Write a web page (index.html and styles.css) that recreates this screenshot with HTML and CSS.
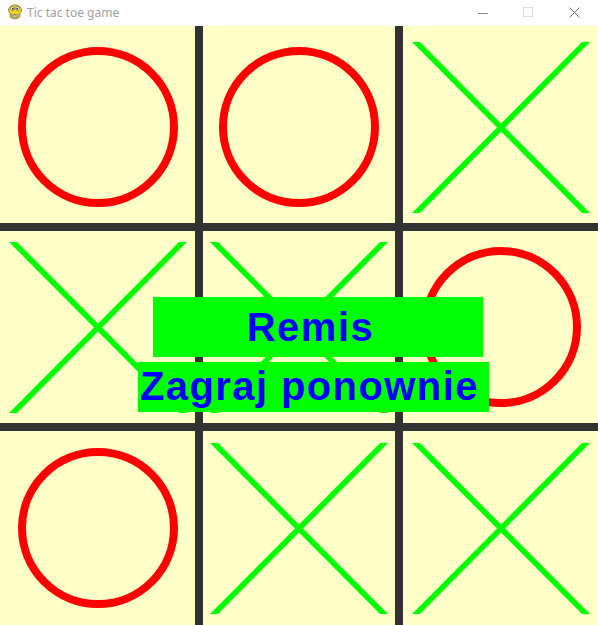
FILE: index.html
```html
<!DOCTYPE html>
<html lang="pl">
<head>
    <meta charset="UTF-8">
    <title>Tic tac toe game</title>
    <link rel="stylesheet" href="styles.css">
</head>
<body>
<div id="window">
    <div class="titlebar">
        <svg class="app-icon" width="16" height="16" viewBox="0 0 16 16">
            <ellipse cx="8" cy="6" rx="6.5" ry="5" fill="#f2d21b" stroke="#8a7a10" stroke-width="0.8"/>
            <circle cx="5.5" cy="4.5" r="2" fill="#fff" stroke="#555" stroke-width="0.6"/>
            <circle cx="10.5" cy="4.5" r="2" fill="#fff" stroke="#555" stroke-width="0.6"/>
            <circle cx="5.8" cy="4.7" r="0.9" fill="#222"/>
            <circle cx="10.2" cy="4.7" r="0.9" fill="#222"/>
            <path d="M3 10 Q8 16 13 10 L13 13 Q8 17 3 13 Z" fill="#d9c01a" stroke="#8a7a10" stroke-width="0.6"/>
            <rect x="5" y="11" width="5" height="3" rx="1" fill="#bbb" stroke="#666" stroke-width="0.5"/>
        </svg>
        <span class="title">Tic tac toe game</span>
        <div class="controls">
            <span class="ctl ctl-min"></span>
            <span class="ctl ctl-max"></span>
            <svg class="ctl-close" width="11" height="11" viewBox="0 0 11 11">
                <path d="M0.5 0.5 L10.5 10.5 M10.5 0.5 L0.5 10.5" stroke="#7a7a7a" stroke-width="1"/>
            </svg>
        </div>
    </div>

    <div class="board">
        <div class="cell top"><svg class="o" viewBox="0 0 160 160"><circle cx="80" cy="80" r="76" /></svg></div>
        <div class="cell top"><svg class="o" viewBox="0 0 160 160"><circle cx="80" cy="80" r="76" /></svg></div>
        <div class="cell top"><svg class="x" viewBox="0 0 178 171"><polygon points="0,0 8,0 178,171 170,171"/><polygon points="170,0 178,0 8,171 0,171"/></svg></div>

        <div class="cell"><svg class="x" viewBox="0 0 178 171"><polygon points="0,0 8,0 178,171 170,171"/><polygon points="170,0 178,0 8,171 0,171"/></svg></div>
        <div class="cell"><svg class="x" viewBox="0 0 178 171"><polygon points="0,0 8,0 178,171 170,171"/><polygon points="170,0 178,0 8,171 0,171"/></svg></div>
        <div class="cell"><svg class="o" viewBox="0 0 160 160"><circle cx="80" cy="80" r="76" /></svg></div>

        <div class="cell"><svg class="o" viewBox="0 0 160 160"><circle cx="80" cy="80" r="76" /></svg></div>
        <div class="cell"><svg class="x" viewBox="0 0 178 171"><polygon points="0,0 8,0 178,171 170,171"/><polygon points="170,0 178,0 8,171 0,171"/></svg></div>
        <div class="cell"><svg class="x" viewBox="0 0 178 171"><polygon points="0,0 8,0 178,171 170,171"/><polygon points="170,0 178,0 8,171 0,171"/></svg></div>

        <div class="result">
            <div class="msg">Remis</div>
            <div class="again">Zagraj ponownie</div>
        </div>
    </div>
</div>
</body>
</html>
```
FILE: styles.css
```css
* {
    margin: 0;
    padding: 0;
    box-sizing: border-box;
}

body {
    background: #fff;
    overflow: hidden;
}

#window {
    width: 598px;
    height: 625px;
    display: flex;
    flex-direction: column;
    overflow: hidden;
}

/* okno - pasek tytulu */
.titlebar {
    height: 26px;
    flex: none;
    background: #fff;
    display: flex;
    align-items: center;
    padding-left: 7px;
}

.app-icon {
    flex: none;
    margin-top: -2px;
}

.title {
    font-family: "Noto Sans", "Open Sans", sans-serif;
    font-size: 12px;
    color: #a0a0a0;
    margin-left: 4px;
    margin-top: -1px;
}

.controls {
    margin-left: auto;
    display: flex;
    align-items: center;
    height: 100%;
    padding-right: 18px;
}

.ctl {
    display: block;
}

.ctl-min {
    width: 10px;
    height: 1px;
    background: #8a8a8a;
}

.ctl-max {
    width: 10px;
    height: 10px;
    border: 1px solid #dcdcdc;
    margin-left: 35px;
    margin-top: -2px;
}

.ctl-close {
    margin-left: 36px;
    margin-top: -2px;
}

/* plansza */
.board {
    flex: 1;
    position: relative;
    background: #323232;
    display: grid;
    grid-template-columns: 195px 192px 1fr;
    grid-template-rows: 197px 192px 1fr;
    gap: 8px;
}

.cell {
    background: #ffffc8;
    display: flex;
    align-items: center;
    justify-content: center;
}

.cell.top {
    padding-top: 5px;
}

.o {
    width: 160px;
    height: 160px;
}

.o circle {
    fill: none;
    stroke: #ff0000;
    stroke-width: 8;
}

.x {
    width: 178px;
    height: 171px;
}

.x polygon {
    fill: #00ff00;
}

.result {
    position: absolute;
    left: 138px;
    top: 271px;
    display: flex;
    flex-direction: column;
    align-items: flex-start;
    font-family: "Liberation Sans", Arial, sans-serif;
    font-weight: bold;
    font-size: 40px;
    color: #0000ff;
}

.msg {
    background: #00ff00;
    width: 330px;
    height: 60px;
    line-height: 60px;
    margin-left: 15px;
    text-align: center;
    padding-right: 15px;
    letter-spacing: 1.5px;
}

.again {
    background: #00ff00;
    width: 351px;
    height: 50px;
    line-height: 48px;
    margin-top: 5px;
    padding-left: 2px;
    letter-spacing: 1.4px;
    white-space: nowrap;
}
```
